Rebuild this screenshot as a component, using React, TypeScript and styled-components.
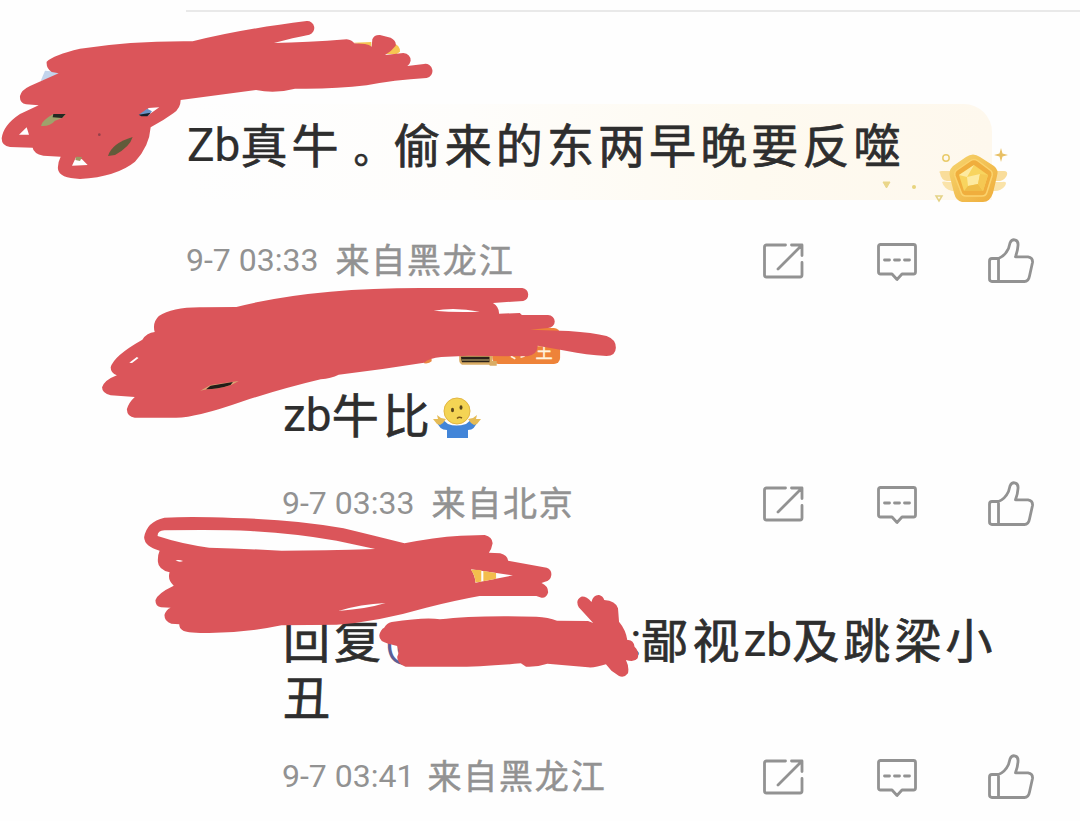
import React from "react";
import styled, { createGlobalStyle } from "styled-components";

const GlobalStyle = createGlobalStyle`
  * {
    box-sizing: border-box;
  }

  body {
    margin: 0;
    background-color: #fefefe;
    font-family: Roboto, "Noto Sans CJK SC", sans-serif;
  }
`;

const Page = styled.main`
  position: relative;
  width: 1080px;
  height: 821px;
  padding-top: 10px;
  overflow: hidden;
`;

const Divider = styled.hr`
  height: 2px;
  margin: 0 0 0 186px;
  border: none;
  background-color: #e9e9e9;
`;

const Comment = styled.article<{ $indent: number; $top: number }>`
  display: flex;
  flex-direction: column;
  margin-left: ${({ $indent }) => $indent}px;
  padding: ${({ $top }) => $top}px 46px 0 0;
`;

const Highlight = styled.div`
  position: relative;
  width: 806px;
  height: 96px;
  margin-bottom: 39px;
  padding-top: 14px;
  border-radius: 0 28px 0 0;
  background: linear-gradient(90deg, #fefefe 0%, #fefdfb 35%, #fefaf0 70%, #fef8ed 100%);
`;

const Body = styled.p<{ $gap?: number }>`
  margin: 0 0 ${({ $gap = 0 }) => $gap}px;
  padding-left: 1px;
  color: #2e2e2e;
  font-size: 47px;
  line-height: 57px;
  letter-spacing: 4.1px;
  white-space: nowrap;
  -webkit-text-stroke: 0.7px #2e2e2e;
`;

const Latin = styled.span`
  font-size: 46px;
  line-height: 1;
  letter-spacing: 0;
  vertical-align: 2px;
  -webkit-text-stroke: 0.2px #2e2e2e;
`;

const FullStop = styled.span`
  display: inline-block;
  width: 51px;
  padding-left: 11px;
  font-size: 39px;
  line-height: 1;
  letter-spacing: 0;
`;

const Mention = styled(Latin)`
  display: inline-block;
  width: 245px;
  color: #5a6096;
  -webkit-text-stroke: 0;
`;

const Footer = styled.footer`
  display: flex;
  align-items: center;
  justify-content: space-between;
  height: 44px;
  color: #929292;
`;

const Meta = styled.div<{ $gap: number }>`
  display: flex;
  align-items: baseline;
  gap: ${({ $gap }) => $gap}px;
  padding-bottom: 9px;
  font-size: 32px;

  span {
    position: relative;
    top: 2px;
    font-size: 34px;
    letter-spacing: 1.8px;
    -webkit-text-stroke: 0.5px #929292;
  }
`;

const Actions = styled.div`
  display: flex;
  gap: 68px;

  svg {
    width: 46px;
    height: 46px;
    fill: none;
    stroke: #929292;
    stroke-width: 2.8;
    stroke-linecap: round;
    stroke-linejoin: round;
  }
`;

const Shrug = styled.svg`
  width: 50px;
  height: 44px;
  margin-left: -2px;
  vertical-align: -7px;
`;

const Medal = styled.svg`
  position: absolute;
  left: 694px;
  top: 36px;
  width: 136px;
  height: 70px;
`;

const Scribble = styled.svg<{ $x: number; $y: number }>`
  position: absolute;
  left: ${({ $x }) => $x}px;
  top: ${({ $y }) => $y}px;
  pointer-events: none;

  .ink {
    fill: #db555a;
  }

  .gap {
    fill: #fefefe;
  }
`;

function CommentFooter({ time, place, gap = 17 }: { time: string; place: string; gap?: number }) {
  return (
    <Footer>
      <Meta $gap={gap}>
        {time}
        <span>{place}</span>
      </Meta>
      <Actions>
        <svg viewBox="0 0 46 46">
          <path d="M25.5 7H6.5Q4.5 7 4.5 9V37Q4.5 39 6.5 39H40Q42 39 42 37V24.5M31.5 7H42V17.5M41 8L18 31" />
        </svg>
        <svg viewBox="0 0 46 46">
          <path d="M6.5 6.5H39.5Q41.5 6.5 41.5 8.5V34Q41.5 36 39.5 36H28L23 41.5L18 36H6.5Q4.5 36 4.5 34V8.5Q4.5 6.5 6.5 6.5ZM10.5 22H15.5M20.5 22H25.5M30.5 22H35.5" />
        </svg>
        <svg viewBox="0 0 46 46">
          <path d="M1.5 23Q1.5 20.5 4 20.5H10.5Q17 18 20.5 10.5L22 5Q23.5 1.5 26.5 1.8Q30.5 2.5 30 7.5Q29.8 12.5 27.5 18.8H40Q45 19.5 44.5 24.5L41.5 38Q40.5 43.5 36.5 43.5H4Q1.5 43.5 1.5 41ZM10.5 20.5V43.5" />
        </svg>
      </Actions>
    </Footer>
  );
}

function MedalArt() {
  return (
    <Medal viewBox="0 0 136 70">
      <defs>
        <linearGradient id="gold" x1="0" y1="0" x2="1" y2="1">
          <stop offset="0" stopColor="#f6d56f" />
          <stop offset="1" stopColor="#efac39" />
        </linearGradient>
      </defs>
      <path d="M60 33Q58 31 62 31H124Q128 31 127 35Q125 40 120 41H67Q61 40 60 33Z" fill="#f9dd9b" />
      <path d="M62 42Q63 41 68 42H122Q128 41 125 46Q121 51 115 51H72Q64 49 62 42Z" fill="#fae3a9" />
      <path d="M86 17Q93 12 100 17L114 26Q119 30 117 36L113 53Q110 62 103 62H82Q76 61 74 53L70 37Q68 31 73 26Z" fill="url(#gold)" />
      <path d="M90 21Q94 18 98 21L110 30Q113 32 112 36L107 52Q106 56 102 56H86Q82 56 81 52L75 36Q74 32 77 30Z" fill="#f0ae3d" stroke="#fbd36d" strokeWidth="1.5" />
      <path d="M94 25L108 35L103 51H84L79 35Z" fill="#f8d45e" />
      <path d="M94 25L87 37L79 35ZM87 37L100 34L98 44L88 46Z" fill="#fdeaa0" />
      <path d="M98 44L103 51H84L88 46Z" fill="#efbd48" />
      <path d="M100 34L108 35L103 51L98 44Z" fill="#f5c853" />
      <circle cx="66" cy="18" r="3.2" fill="none" stroke="#e9cb6b" strokeWidth="1.5" />
      <path d="M121 8L122.5 13.5L128 15L122.5 16.5L121 22L119.5 16.5L114 15L119.5 13.5Z" fill="#e8c065" />
      <path d="M3 42H10L6.5 48Z" fill="#ead68a" stroke="#ead68a" />
      <path d="M56 56H62L59 61Z" fill="none" stroke="#e4d285" strokeWidth="1.5" />
      <circle cx="34" cy="47" r="2" fill="#e8d47d" />
    </Medal>
  );
}

export default function App() {
  return (
    <>
      <GlobalStyle />
      <Page>
        <Divider />
        <Comment $indent={186} $top={92}>
          <Highlight>
            <Body>
              <Latin>Zb</Latin>真牛<FullStop>。</FullStop>偷来的东两早晚要反噬
            </Body>
            <MedalArt />
          </Highlight>
          <CommentFooter time="9-7 03:33" place="来自黑龙江" />
        </Comment>

        <Comment $indent={282} $top={105}>
          <Body $gap={37}>
            <Latin>zb</Latin>牛比
            <Shrug viewBox="0 0 50 44">
              <path d="M4 24L10 23L16 28Q24 31 34 28L40 23L46 24Q43 34 36 34V42H15V34Q7 34 4 24Z" fill="#4285d8" />
              <path d="M5 28L1 23L6 23L5 19L9 22L14 23L11 27L8 29ZM45 28L49 23L44 23L45 19L41 22L36 23L39 27L42 29Z" fill="#e5bb55" />
              <circle cx="25" cy="15" r="13" fill="#f4d454" stroke="#e3b641" strokeWidth="1" />
              <ellipse cx="20.5" cy="14" rx="1.5" ry="2.3" fill="#59451c" />
              <ellipse cx="29" cy="11.5" rx="1.5" ry="2.3" fill="#59451c" />
              <path d="M25 22.5Q27 20.5 30 22" fill="none" stroke="#7a5718" strokeWidth="1.5" />
            </Shrug>
          </Body>
          <CommentFooter time="9-7 03:33" place="来自北京" />
        </Comment>

        <Comment $indent={282} $top={87}>
          <Body $gap={28}>
            回复<Mention>@</Mention>
            <Latin>:</Latin>鄙视<Latin>zb</Latin>及跳梁小
            <br />丑
          </Body>
          <CommentFooter time="9-7 03:41" place="来自黑龙江" gap={13} />
        </Comment>

        <Scribble $x={0} $y={0} width="450" height="200" viewBox="0 0 1350 600">
          <path d="M122 243L135 212L180 216L174 230Z" fill="#c2d4ec" />
          <path d="M1060 128L1114 126V140ZM1180 130Q1200 135 1200 155L1190 162H1150Z" fill="#f6c552" />
          <path
            className="ink"
            d="M578 124Q720 88 920 63A21 21 0 0 1 928 104Q880 113 822 129Q920 128 1040 118Q1055 120 1063 130L1095 132Q1108 134 1115 140L1117 118Q1122 104 1140 105L1172 113Q1190 122 1187 137Q1176 152 1155 165L1210 159Q1232 162 1232 182Q1230 192 1222 198L1272 192A21 21 0 0 1 1280 234Q1180 240 1100 256Q1000 268 885 266Q825 282 768 270L542 300Q542 325 520 340Q490 362 452 382Q448 440 405 485Q350 530 240 537Q178 535 174 508Q172 490 182 470L130 467Q100 460 98 443L30 441Q5 438 5 415Q10 375 60 342L116 316L78 313Q58 308 60 288Q64 270 90 258L176 220L155 216Q138 205 140 185Q160 165 240 146Q400 122 578 124Z"
          />
          <path className="gap" d="M57 404L80 382L87 404ZM216 497L228 472L246 478L263 495ZM430 338L446 324L478 322L445 345Z" />
          <path d="M123 378Q124 362 160 342H197Q192 354 165 362Q150 380 123 378Z" fill="#9fa26b" />
          <path d="M160 342H197L186 354L158 352Z" fill="#242922" />
          <path d="M228 470L246 471L240 483L226 480Z" fill="#9b9962" />
          <path d="M324 468Q335 430 398 411Q390 440 345 465Z" fill="#625b3a" />
          <path d="M416 344L442 326L456 334L445 347Z" fill="#6b92c8" />
          <path d="M416 344L452 338L442 349L424 349Z" fill="#16202c" />
          <circle cx="298" cy="404" r="4" fill="#94404a" />
        </Scribble>

        <Scribble $x={90} $y={280} width="540" height="170" viewBox="0 0 1568 510" preserveAspectRatio="none">
          <rect x="1168" y="144" width="197" height="108" rx="18" fill="#ee8339" />
          <text x="1294" y="234" fontSize="50" fill="#fff4df" stroke="#fff4df">王</text>
          <path d="M1222 229L1235 236M1250 232L1262 228" stroke="#fff4df" strokeWidth="5" />
          <path d="M970 236H992V244Q985 252 970 250Z" fill="#e98742" />
          <path d="M1072 222H1168V243H1181V257H1162L1158 254H1080Q1072 250 1072 240Z" fill="#d9ac64" />
          <path d="M1077 230H1160V247H1080Z" fill="#2b2118" />
          <path d="M1080 240H1160" stroke="#a59362" strokeWidth="4" />
          <path
            className="ink"
            d="M425 81Q640 24 960 24L1255 24A20 20 0 0 1 1258 63L1170 69Q1188 80 1188 101L1248 99L1254 105L1330 105A19 19 0 0 1 1330 144L1278 149L1390 153Q1460 158 1500 168Q1527 178 1527 203Q1526 228 1500 228Q1440 225 1385 213L1300 197Q1300 222 1270 229L1100 227L1020 231Q985 234 970 248Q850 268 722 284Q700 295 670 298Q560 325 440 365Q310 412 250 413L130 413Q108 411 107 388Q112 368 130 351L60 346Q35 340 35 322Q42 300 78 286Q60 280 60 262Q68 228 152 179Q165 158 188 156Q180 128 200 108Q240 80 330 82Z"
          />
          <path className="gap" d="M998 92Q1060 81 1132 95Q1060 98 998 92ZM114 248L136 231L141 234L122 249Z" />
          <path d="M320 332L350 315L432 303L410 315Q370 328 340 328Z" fill="#dca474" />
          <path d="M337 328L350 317L415 306L408 315Q370 328 337 328Z" fill="#211d18" />
        </Scribble>

        <Scribble $x={130} $y={480} width="540" height="200" viewBox="0 0 1568 600" preserveAspectRatio="none">
          <path
            className="ink"
            d="M797 190Q880 172 960 167L1030 165Q1052 170 1053 190Q1050 208 1042 218L1075 220Q1096 226 1098 242L1210 263A22 22 0 0 1 1205 305L1195 309Q1215 318 1214 338Q1208 355 1195 353L1180 348L1015 348Q950 360 860 383Q720 425 600 434L440 436Q340 458 230 459Q160 460 152 450Q143 445 143 433L120 431Q100 425 100 405Q105 388 118 383L90 382Q73 378 74 360Q80 340 127 317Q108 300 115 277Q82 268 81 245Q80 225 86 212Q42 200 41 172Q48 125 100 113Q180 108 300 114Q480 118 620 145Q700 165 797 190Z"
          />
          <path className="gap" d="M80 168Q80 152 100 151Q260 148 350 153Q480 160 600 182L712 207Q560 212 440 212Q330 206 230 203Q150 192 80 168ZM132 241Q143 238 154 243Q143 248 132 241ZM605 393Q670 372 742 369Q690 386 605 393ZM990 268L1112 286L1003 308Q1003 290 990 268Z" />
          <path d="M990 269L1020 270V305L1003 307Q1003 288 990 269ZM1026 273L1063 279V296L1026 304Z" fill="#f3bd4d" />
          <path
            className="ink"
            d="M760 426Q860 410 900 418Q1000 405 1180 410Q1215 412 1240 422L1330 423L1345 429L1303 382Q1292 360 1310 350Q1325 348 1340 366Q1345 344 1362 345Q1374 348 1377 360Q1410 362 1417 385L1420 425Q1440 450 1444 480Q1462 478 1465 500Q1480 515 1474 535Q1465 548 1440 540Q1450 560 1446 580Q1435 595 1420 588L1398 572L1382 553Q1350 564 1330 562L1212 551Q1180 562 1150 560L1135 550Q1000 562 920 560L800 560Q775 550 776 530Q784 515 776 498L750 491Q722 485 724 465Q728 448 738 443Q745 430 760 426Z"
          />
        </Scribble>
      </Page>
    </>
  );
}
